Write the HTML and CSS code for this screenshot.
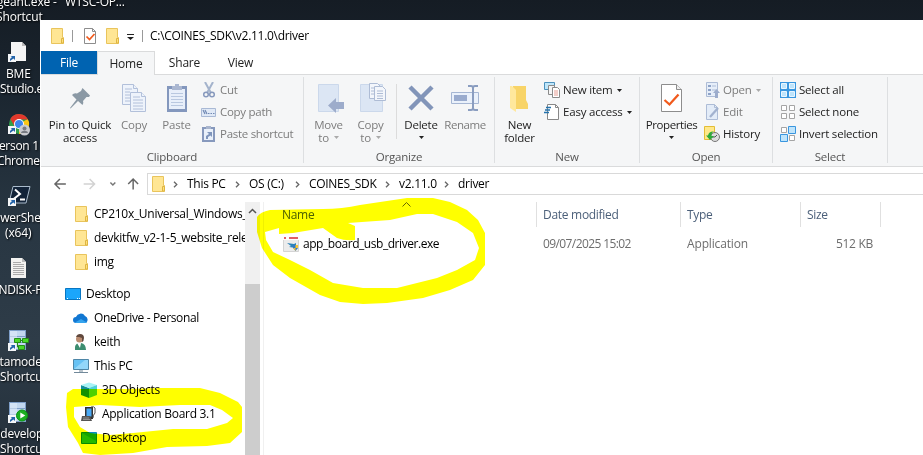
FILE: index.html
```html
<!DOCTYPE html>
<html lang="en">
<head>
<meta charset="utf-8">
<title>driver</title>
<link rel="stylesheet" href="styles.css">
</head>
<body>
<svg class="defs" width="0" height="0">
  <symbol id="folder" viewBox="0 0 13 16"><path d="M.5.5h11v9h1v6H.5z" fill="#ffe694" stroke="#e9c45c"/><path d="M10.500 15V10.500h2V15z" fill="#ffe07c" stroke="#deb542"/></symbol>
  <symbol id="chev" viewBox="0 0 5 7"><path d="M1 .7 3.800 3.500 1 6.300" fill="none" stroke="#666" stroke-width="1.300"/></symbol>
  <symbol id="drop" viewBox="0 0 5 3"><path d="M0 0h5L2.500 3z" fill="currentColor"/></symbol>
  <symbol id="link" viewBox="0 0 8 8"><path d="M0 0h8v8H0z" fill="#f4f6f8"/><path d="M2 7V5l2-2-1.500-1H7v4L5.500 4.500z" fill="#2364aa"/></symbol>
  <symbol id="check" viewBox="0 0 21 28"><path d="M.5.5h15l5 5v22H.5z" fill="#fff" stroke="#8d8d8d"/><path d="M15.500.5v5h5" fill="#eee" stroke="#8d8d8d"/><path d="m3.500 16 5 4.500 9-10" fill="none" stroke="#f15a1c" stroke-width="2.300"/></symbol>
  <symbol id="server" viewBox="0 0 17 21"><path d="M0 0h17v20H0z" fill="#7f9fc9"/><path d="M1 1h15v5H1zM1 7h15v5H1zM1 13h15v6H1z" fill="#c2d7ef"/><path d="M1 1h7v18H1z" fill="#e0ebf8" opacity=".6"/></symbol>
</svg>

<main class="desktop">
  <div class="lbl l1">geant.exe -</div><div class="lbl l2">WTSC-OP...</div><div class="lbl l3">Shortcut</div>
  <svg class="di i1" width="22" height="22" viewBox="0 0 22 22"><path d="M4 1h11l4 4v15H4z" fill="#f5f5f5"/><path d="M15 1v4h4z" fill="#bbb"/><use href="#link" x="1" y="13" width="8" height="8"/></svg>
  <div class="lbl l4">BME</div><div class="lbl l5">Studio.exe</div>
  <svg class="di i2" width="24" height="24" viewBox="0 0 24 24"><circle cx="12" cy="11" r="10" fill="#30a04b"/><path d="M12 11 20.700 6A10 10 0 0 1 12 21z" fill="#fbc613"/><path d="M12 6.500h9A10 10 0 0 0 3.300 6L8 14z" fill="#e2382c"/><circle cx="12" cy="11" r="5" fill="#fff"/><circle cx="12" cy="11" r="4" fill="#3f85ee"/><circle cx="17.500" cy="17" r="5.500" fill="#c9cbd0"/><circle cx="17.500" cy="15.500" r="2" fill="#777b82"/><path d="M14 20c0-3 7-3 7 0z" fill="#777b82"/><use href="#link" x="1" y="13" width="8" height="8"/></svg>
  <div class="lbl l6">Person 1 -</div><div class="lbl l7">Chrome</div>
  <svg class="di i3" width="24" height="22" viewBox="0 0 24 22"><path d="M6 1.500h17L19 18H2z" fill="#122338" stroke="#a9bacb"/><path d="m8 4.500 5 4.500-7 5.500M13 14.500h5" fill="none" stroke="#fff" stroke-width="2"/><use href="#link" x="1" y="13" width="8" height="8"/></svg>
  <div class="lbl l8">PowerShell</div><div class="lbl l9">(x64)</div>
  <svg class="di i4" width="16" height="20" viewBox="0 0 16 20"><path d="M0 0h11l4 4v16H0z" fill="#f2f2f0"/><path d="M11 0v4h4z" fill="#bbb"/><path d="M2 4.500h8M2 6.500h11M2 8.500h11M2 10.500h11M2 12.500h11M2 14.500h11M2 16.500h11" stroke="#aaa"/></svg>
  <div class="lbl l10">SANDISK-PC</div>
  <svg class="di i5" width="24" height="22" viewBox="0 0 24 22"><use href="#server" x="2" y="0" width="17" height="21"/><path d="M7.500 8.500h6v4h-6zM15.500 8.500h6v4h-6zM11.500 15.500h6v4h-6z" fill="#48d828" stroke="#238d17"/><path d="M14 10.500h1M10.500 13v4h1" fill="none" stroke="#238d17"/><use href="#link" x="1" y="13" width="8" height="8"/></svg>
  <div class="lbl l11">datamodeler</div><div class="lbl l12">Shortcut</div>
  <svg class="di i6" width="24" height="22" viewBox="0 0 24 22"><use href="#server" x="2" y="0" width="17" height="21"/><circle cx="15" cy="13.500" r="5.500" fill="#1caf22" stroke="#0a9414"/><path d="m13.300 10.500 5 3-5 3z" fill="#fff"/><use href="#link" x="1" y="13" width="8" height="8"/></svg>
  <div class="lbl l13">sqldeveloper</div><div class="lbl l14">Shortcut</div>

  <section class="window">
    <header class="titlebar">
      <svg class="t-folder" width="13" height="16"><use href="#folder"/></svg>
      <i class="bar b1"></i>
      <svg class="t-check" width="12" height="16" viewBox="0 0 12 16"><path d="M.5.500h8l3 3v12H.5z" fill="#fff" stroke="#8d8d8d"/><path d="M8.500.5v3h3" fill="none" stroke="#8d8d8d"/><path d="m2.500 8.500 3 3 5-5.500" fill="none" stroke="#f15a1c" stroke-width="1.700"/></svg>
      <svg class="t-folder2" width="13" height="16"><use href="#folder"/></svg>
      <svg class="t-menu" width="7" height="6" viewBox="0 0 7 6"><path d="M0 0h7v1H0zM0 3h7L3.500 6z" fill="#222"/></svg>
      <i class="bar b2"></i>
      <span class="path">C:\COINES_SDK\v2.11.0\driver</span>
    </header>
    <nav class="tabs"><span class="tab file">File</span><span class="tab home">Home</span><span class="tab share">Share</span><span class="tab view">View</span></nav>

    <div class="ribbon">
      <section class="group clipboard">
        <div class="tools">
          <div class="big pin"><svg width="30" height="30" viewBox="0 0 30 30"><path d="M17.500 5 25 12.500 24 14 21.500 14 18 18Q19 20.500 17.500 22L13 18 5.500 25.500 5 25 11.500 16.500 7 12Q9 9.500 12 10.500L16 8z" fill="#8b99a5"/></svg><span>Pin to Quick</span><span>access</span></div>
          <div class="big copy off"><svg width="30" height="30" viewBox="0 0 30 30"><g fill="#eef3fb" stroke="#b2c0da"><path d="M3.500 1.500h11l4 4v16h-15z"/><path d="M14.500 1.500v4h4M6 6h7M6 9h5M6 12h5M6 15h5M6 18h5"/><path d="M11.500 9.500h11l4 4v15h-15z"/><path d="M22.500 9.500v4h4M14 14h7M14 17h10M14 20h10M14 23h10M14 26h10" /></g></svg><span>Copy</span></div>
          <div class="big paste off"><svg width="30" height="30" viewBox="0 0 30 30"><path d="M5 3h20v26H5z" fill="#8397bd"/><path d="M7 6h16v20H7z" fill="#e8effa"/><path d="M9 10.500h12M9 13.500h12M9 16.500h12M9 19.500h12M9 22.500h12" stroke="#b9c8e0"/><path d="M10 7V3h3V1h4v2h3v4z" fill="#aab7d1"/></svg><span>Paste</span></div>
          <div class="smalls off">
            <div><svg width="16" height="16" viewBox="0 0 16 16"><path d="m4 0 6 11M12 0 6 11" stroke="#a4b3cc" stroke-width="2"/><circle cx="5" cy="12.500" r="2.300" fill="none" stroke="#8799bd" stroke-width="1.500"/><circle cx="11" cy="12.500" r="2.300" fill="none" stroke="#8799bd" stroke-width="1.500"/></svg><span>Cut</span></div>
            <div><svg width="16" height="16" viewBox="0 0 16 16"><path d="M.5 4.500h14v8H.5z" fill="#e0e9f6" stroke="#a9b9d5"/><path d="m2 6 2 4m0-4 2 4M7 9.500h1.500m1 0H11m1 0h1.500" stroke="#7189b3" stroke-width="1.200"/></svg><span>Copy path</span></div>
            <div><svg width="16" height="16" viewBox="0 0 16 16"><path d="M2 2h11v13H2z" fill="#e9f0fa" stroke="#8799bd" stroke-width="2"/><path d="M5 0h5v3H5z" fill="#a9b5cd"/><path d="M5 13v-3l3-2-2-2h5v5L9.500 9.500 7 11v2z" fill="#7f95bc"/></svg><span>Paste shortcut</span></div>
          </div>
        </div><footer>Clipboard</footer>
      </section>
      <section class="group organize">
        <div class="tools">
          <div class="big move off"><svg width="30" height="30" viewBox="0 0 30 30"><path d="M4.500 1.500h20v27h-20z" fill="#dce6f4" stroke="#cbd8eb"/><path d="M14 22.500 22 15v4h8v7h-8v4z" fill="#9daccb"/></svg><span>Move</span><span>to <svg class="dr" width="5" height="3"><use href="#drop"/></svg></span></div>
          <div class="big copyto off"><svg width="30" height="30" viewBox="0 0 30 30"><path d="M4.500 1.500h22v27h-22z" fill="#dce6f4" stroke="#cbd8eb"/><g fill="#f3f6fb" stroke="#aebcd5"><path d="M13.500.5h8l3 3v12h-11zM15 5h5M15 8h3M15 11h3"/><path d="M18.500 3.500h8l3 3v11h-11zM21 8h6M21 10.500h6M21 13h6M21 15.500h6"/></g></svg><span>Copy</span><span>to <svg class="dr" width="5" height="3"><use href="#drop"/></svg></span></div>
          <i class="split"></i>
          <div class="big delete"><svg width="30" height="30" viewBox="0 0 30 30"><path d="m4 4 22 22M26 4 4 26" stroke="#8295b9" stroke-width="4.500"/></svg><span>Delete</span><span><svg class="dr" width="5" height="3"><use href="#drop"/></svg></span></div>
          <div class="big rename off"><svg width="30" height="30" viewBox="0 0 30 30"><path d="M1.500 9.500h27v11h-27z" fill="#eaf1fb" stroke="#a5b6d3"/><path d="M4 12h13v6H4z" fill="#99abce"/><path d="M18 3h3q2 0 2 2 0-2 2-2h3M18 27h3q2 0 2-2 0 2 2 2h3M23 4v22" fill="none" stroke="#8a9dc0" stroke-width="2"/></svg><span>Rename</span></div>
        </div><footer>Organize</footer>
      </section>
      <section class="group new">
        <div class="tools">
          <div class="big folder"><svg width="30" height="30" viewBox="0 0 30 30"><path d="M8 3h13v14l2 4v5H8z" fill="#f8d468"/><path d="M5 3h2l4 4v22l-6-4z" fill="#ffe89d"/></svg><span>New</span><span>folder</span></div>
          <div class="smalls">
            <div><svg width="16" height="16" viewBox="0 0 16 16"><path d="M.5.5h10v7H.5z" fill="#bfe6fa" stroke="#4b91bd"/><path d="M4.500 3.500h6v9h-6z" fill="#f5f5f5" stroke="#8a8a8a"/><path d="M8.500 5.500h5l2 2v8h-7z" fill="#fff" stroke="#8a8a8a"/><path d="M10 9h4M10 11h4M10 13h4" stroke="#e59b91"/></svg><span>New item</span><svg class="dr" width="5" height="3"><use href="#drop"/></svg></div>
            <div><svg width="16" height="16" viewBox="0 0 16 16"><path d="M3.500.5h8l3 3v12h-11z" fill="#fff" stroke="#888"/><path d="M11.500.5v3h3" fill="none" stroke="#888"/><path d="M2 3.500h5M1 6h5M0 8.500h5" stroke="#2473ad" stroke-width="1.300"/></svg><span>Easy access</span><svg class="dr" width="5" height="3"><use href="#drop"/></svg></div>
          </div>
        </div><footer>New</footer>
      </section>
      <section class="group open">
        <div class="tools">
          <div class="big props"><svg width="30" height="30" viewBox="0 0 30 30"><use href="#check" x="4" y="1" width="21" height="28"/></svg><span>Properties</span><span><svg class="dr" width="5" height="3"><use href="#drop"/></svg></span></div>
          <div class="smalls">
            <div class="off"><svg width="16" height="16" viewBox="0 0 16 16"><path d="M2.500.5h11v14h-11z" fill="#e6eef9" stroke="#adbcd6"/><path d="M4 3h3v2H4zM4 7h3v2H4zM4 11h3v2H4z" fill="#8da2c7"/><path d="M8 4h4M8 8h4" stroke="#adbcd6"/><path d="m12.500 7 3.500 4h-2v5h-3v-5H9z" fill="#9caccc"/></svg><span>Open</span><svg class="dr" width="5" height="3"><use href="#drop"/></svg></div>
            <div class="off"><svg width="16" height="16" viewBox="0 0 16 16"><path d="M2.500.5h8l3 3v12h-11z" fill="#e3ecf8" stroke="#adbcd6"/><path d="M10.500.5v3h3" fill="none" stroke="#adbcd6"/><path d="m6 13 8-9" stroke="#a2b2cf" stroke-width="2.300"/></svg><span>Edit</span></div>
            <div><svg width="16" height="16" viewBox="0 0 16 16"><path d="M.5.500h10v13H.5z" fill="#ffe88a" stroke="#e3bd35"/><circle cx="11" cy="11" r="4.500" fill="#ddd" stroke="#777"/><path d="m11 11 2-2m-2 2h-3" stroke="#555"/><path d="M2 9.500h2Q5 5 10 5.500 7 7 7.500 10H10l-4 4z" fill="#2faa3a"/></svg><span>History</span></div>
          </div>
        </div><footer>Open</footer>
      </section>
      <section class="group select">
        <div class="tools"><div class="smalls">
          <div><svg width="16" height="16" viewBox="0 0 16 16"><path d="M0 0h16v16H0z" fill="#3996df"/><path d="M1.500 1.500h5v5h-5zM9.500 1.500h5v5h-5zM1.500 9.500h5v5h-5zM9.500 9.500h5v5h-5z" fill="#bfe4fb" stroke="#e9f6ff"/></svg><span>Select all</span></div>
          <div><svg width="16" height="16" viewBox="0 0 16 16"><path d="M1.500 1.500h5v5h-5zM9.500 1.500h5v5h-5zM1.500 9.500h5v5h-5zM9.500 9.500h5v5h-5z" fill="#fff" stroke="#a5a5a5"/></svg><span>Select none</span></div>
          <div><svg width="16" height="16" viewBox="0 0 16 16"><path d="M1.500 1.500h5v5h-5zM9.500 9.500h5v5h-5z" fill="#fff" stroke="#a5a5a5"/><path d="M8.500.5h7v7h-7zM.5 8.500h7v7h-7z" fill="#bfe4fb" stroke="#3996df"/></svg><span>Invert selection</span></div>
        </div></div><footer>Select</footer>
      </section>
    </div>

    <div class="address">
      <svg class="nav" width="96" height="16" viewBox="0 0 96 16" fill="none"><path d="M3 8h11M8 3 3 8l5 5" stroke="#666" stroke-width="1.500"/><path d="M32 8h11m-5-5 5 5-5 5" stroke="#d2d2d2" stroke-width="1.500"/><path d="m59 6.500 2.500 2.500L64 6.500" stroke="#777" stroke-width="1.500"/><path d="M82 13.500V3m-5 5 5-5 5 5" stroke="#666" stroke-width="1.500"/></svg>
      <div class="crumbs">
        <svg class="c-folder" width="13" height="16"><use href="#folder"/></svg>
        <svg class="c0" width="5" height="7"><use href="#chev"/></svg><span class="c1">This PC</span>
        <svg width="5" height="7"><use href="#chev"/></svg><span class="c2">OS (C:)</span>
        <svg width="5" height="7"><use href="#chev"/></svg><span class="c3">COINES_SDK</span>
        <svg width="5" height="7"><use href="#chev"/></svg><span class="c4">v2.11.0</span>
        <svg width="5" height="7"><use href="#chev"/></svg><span class="c5">driver</span>
      </div>
    </div>

    <div class="body">
      <aside class="tree">
        <div class="row r2"><svg width="16" height="16"><use href="#folder" x="0" y="0" width="13" height="16"/></svg><span class="n1">CP210x_Universal_Windows_</span></div>
        <div class="row r2"><svg width="16" height="16"><use href="#folder" x="0" y="0" width="13" height="16"/></svg><span class="n2">devkitfw_v2-1-5_website_release</span></div>
        <div class="row r2"><svg width="16" height="16"><use href="#folder" x="0" y="0" width="13" height="16"/></svg><span>img</span></div>
        <div class="row r1"><svg width="16" height="16" viewBox="0 0 16 16"><path d="M.5 2.500h15v11H.5z" fill="#1ba6fb" stroke="#0876c2"/><path d="M2 12.500h1m9 0h1m1 0h1" stroke="#fff"/></svg><span>Desktop</span></div>
        <div class="row r2b"><svg width="16" height="16" viewBox="0 0 16 16"><path d="M3 13a3 3 0 0 1 0-6 5 5 0 0 1 9-1 4 4 0 0 1 1 7z" fill="#1277d2"/><path d="M2 12.500 8 9l6 3.500-1 .5H3z" fill="#35a4ee"/></svg><span class="n5">OneDrive - Personal</span></div>
        <div class="row r2b"><svg width="16" height="16" viewBox="0 0 16 16"><path d="M2 16q-1-6 4-7h2q5 1 5 7z" fill="#3c8d70"/><path d="m4 9 3 5 1-5z" fill="#fff"/><circle cx="6.500" cy="5" r="3.500" fill="#b98b70"/><path d="M3 3q1-3 4-3 4 0 4 4 0 3-2 4V4L6 3z" fill="#61483c"/></svg><span>keith</span></div>
        <div class="row r2b"><svg width="16" height="16" viewBox="0 0 16 16"><path d="M.5 1.500h15v10H.5z" fill="#67c2f4" stroke="#4e86a7"/><path d="M1 11 12 2h3v9z" fill="#93d7fa"/><path d="M1 14.500h14M6 13h4" stroke="#72899a"/></svg><span>This PC</span></div>
        <div class="row r3"><svg width="16" height="16" viewBox="0 0 16 16"><path d="M0 3v10l8 3V6z" fill="#12909c"/><path d="m0 3 8-2.500L16 3 8 6z" fill="#a8f2f5"/><path d="M8 6v10l8-3V3z" fill="#4fd0da"/></svg><span>3D Objects</span></div>
        <div class="row r3"><svg width="16" height="16" viewBox="0 0 16 16"><path d="M4 1h8v12H4z" fill="#333"/><path d="M5.500 2.500h5v8h-5z" fill="#4aa9f5"/><path d="M1 10h8l2 5H0z" fill="#555"/><path d="M2 12h6M2 13.500h7" stroke="#bbb" stroke-width=".6"/><path d="M12 12q0-3 2-5V2q-1-2-4-1" fill="none" stroke="#555"/></svg><span class="n9">Application Board 3.1</span></div>
        <div class="row r3"><svg width="16" height="16" viewBox="0 0 16 16"><path d="M.5 2.500h15v11H.5z" fill="#14a5f4" stroke="#078bc4"/><path d="m1 3 14 8v2H1z" fill="#25b9b5"/></svg><span>Desktop</span></div>
      </aside>
      <div class="scroll"><svg width="9" height="6" viewBox="0 0 9 6"><path d="m1 5 3.500-3.500L8 5" fill="none" stroke="#555" stroke-width="1.500"/></svg><div class="thumb"></div></div>
      <section class="files">
        <svg class="sort" width="9" height="5" viewBox="0 0 9 5"><path d="m.5 4.500 4-4 4 4" fill="none" stroke="#666"/></svg>
        <div class="head"><span class="h1">Name</span><span class="h2">Date modified</span><span class="h3">Type</span><span class="h4">Size</span></div>
        <div class="item"><div class="name"><svg width="16" height="16" viewBox="0 0 16 16"><path d="M.5.5h15v15H.5z" fill="#ececec" stroke="#d4d4d4"/><path d="M0 0h16v4H0z" fill="#fff"/><path d="M1 2h2m3 0h9" stroke="#d92c33" stroke-width="1.300"/><path d="m4 7 7 1 2-1v5l-7-1 2-1z" fill="#2c83b9"/><path d="M10 9h5v3l-2.500 3-2.500-3z" fill="#3278c6"/><path d="M12.500 9H15v3h-5l2.500 3z" fill="#f7c531"/></svg><span>app_board_usb_driver.exe</span></div><span class="date">09/07/2025 15:02</span><span class="type">Application</span><span class="size">512 KB</span></div>
      </section>
    </div>
  </section>

  <svg class="marker" width="923" height="455" viewBox="0 0 923 455" fill="#ff0" fill-rule="evenodd">
    <path d="M257 217Q260 212 270 210L323 209Q342 209 360 205L407 198H433L450 202 467 210 478 220 485 233V265L473 280 450 290 423 298 387 303 363 304 340 302 320 295 290 278 273 265 262 248 257 232ZM265 232 279 228V234L293 233 323 228 337 238Q345 241 355 240V226L348 223 390 220 417 214H433L457 222 473 233 479 248 475 260 457 270 437 278 397 288H363L333 283 310 270 290 260 273 252 266 240Z"/>
    <path d="M67 393 73 389H127L160 388H200L220 393 238 402 242 407V432L230 443 207 446 167 447 133 453 100 455 83 453 78 443 68 427 66 407ZM74 407 100 405 140 407 180 405H210L222 410 233 418 227 423 207 429H173L133 433 110 435 90 433 80 427 74 417Z"/>
  </svg>
</main>
</body>
</html>
```
FILE: styles.css
```css
* { box-sizing: border-box; }
body { margin: 0; width: 923px; height: 455px; overflow: hidden; font: 12px/16px "Open Sans", "Noto Sans", sans-serif; letter-spacing: -.29px; color: #000; }
svg { flex: none; display: block; }
.defs { position: absolute; }
span { white-space: nowrap; }
.desktop { position: relative; width: 923px; height: 455px; overflow: hidden; background: linear-gradient(#151c24, #1b2630 20%, #283642 48%, #2e3c48 75%, #24303b); }

/* Desktop shortcuts */
.lbl, .di { position: absolute; }
.lbl { color: #fff; white-space: nowrap; text-shadow: 1px 1px 2px #000; letter-spacing: -.15px; }
.l1 { left: -3px; top: -6px; } .l2 { left: 65px; top: -6px; letter-spacing: -.2px; } .l3 { left: -4px; top: 9px; }
.l4 { left: 6px; top: 66px; } .l5 { left: 0; top: 81px; letter-spacing: -.35px; }
.l6 { left: -8px; top: 138px; letter-spacing: -.3px; } .l7 { left: -3px; top: 153px; letter-spacing: -.4px; }
.l8 { left: -14px; top: 210px; } .l9 { left: 5px; top: 225px; }
.l10 { left: -15px; top: 282px; letter-spacing: -.35px; }
.l11 { left: -14px; top: 354px; letter-spacing: -.2px; } .l12 { left: 0; top: 369px; }
.l13 { left: -15px; top: 426px; letter-spacing: -.25px; } .l14 { left: 0; top: 441px; }
.i1 { left: 7px; top: 41px; } .i2 { left: 7px; top: 113px; } .i3 { left: 7px; top: 185px; }
.i4 { left: 11px; top: 258px; } .i5 { left: 7px; top: 330px; } .i6 { left: 7px; top: 402px; }

/* Explorer window */
.window { position: absolute; left: 40px; top: 20px; width: 883px; height: 435px; padding-left: 1px; background: #fff; display: flex; flex-direction: column; }
.titlebar { height: 31px; flex: none; display: flex; align-items: center; padding-left: 10px; }
.bar { width: 1px; height: 12px; background: #999; }
.b1 { margin-left: 8px; } .t-check { margin-left: 11px; } .t-folder2 { margin-left: 10px; }
.t-menu { margin: 3px 0 0 8px; } .b2 { margin-left: 8px; } .path { margin-left: 7px; }
.tabs { height: 23px; flex: none; display: flex; position: relative; z-index: 1; }
.tab { text-align: center; line-height: 24px; height: 23px; letter-spacing: -.2px; color: #222; }
.file { width: 56px; background: #0063b1; color: #fff; }
.home { width: 58px; height: 24px; background: #f5f6f7; border: 1px solid #dadbdc; border-bottom: 0; line-height: 23px; }
.share { width: 59px; } .view { width: 53px; }
.ribbon { height: 93px; flex: none; display: flex; background: #f5f6f7; border: solid #dadbdc; border-width: 1px 0; color: #222; font-size: 11.5px; letter-spacing: -.2px; }
.group { height: 86px; margin-top: 2px; border-right: 1px solid #dddfe1; display: flex; flex-direction: column; }
.tools { height: 71px; flex: none; display: flex; }
.group footer { text-align: center; color: #555; height: 15px; line-height: 18px; flex: none; }
.clipboard { width: 263px; } .organize { width: 191px; } .new { width: 145px; } .open { width: 133px; } .select { width: 115px; }
.big { display: flex; flex-direction: column; align-items: center; padding-top: 6px; }
.big > svg { margin-bottom: 5px; }
.big span { height: 13px; line-height: 13px; }
.dr { display: inline-block; margin-left: 2px; vertical-align: 3px; color: #222; }
.off { color: #7c7c7c; } .off .dr { color: #aaa; }
.pin { width: 78px; } .copy { width: 30px; } .paste { width: 55px; }
.pin span { letter-spacing: -.15px; } .props span { letter-spacing: -.4px; }
.smalls { padding-top: 2px; }
.smalls > div { height: 22px; display: flex; align-items: center; gap: 3px; }
.smalls .dr { margin-left: 1px; }
.clipboard .smalls { margin-left: -3px; letter-spacing: -.28px; }
.move { width: 49px; } .copyto { width: 35px; } .split { width: 1px; height: 55px; margin: 7px 0 0 8px; background: #dcdcdc; }
.delete { width: 48px; } .rename { width: 40px; } .rename span { letter-spacing: -.45px; }
.delete .dr, .props .dr { margin-left: 0; }
.folder { width: 49px; }
.props { width: 63px; } .open .smalls { margin-left: 1px; } .select .smalls { padding-left: 7px; }

.address { height: 35px; flex: none; display: flex; padding-top: 6px; }
.nav { margin: 3px 0 0 11px; width: 95px; }
.crumbs { flex: 1; height: 22px; border: 1px solid #d9d9d9; border-right: 0; display: flex; align-items: center; }
.c-folder { margin-left: 4px; } .c0 { margin-left: 8px; }
.crumbs span { padding-left: 9px; }
.c1 { width: 57px; } .c2 { width: 55px; } .c3 { width: 85px; } .c4 { width: 54px; }

.body { flex: 1; min-height: 0; display: flex; }
.tree { width: 204px; overflow: hidden; }
.row { height: 24px; display: flex; align-items: center; gap: 4px; }
.r1 { margin-top: 8px; padding-left: 24px; gap: 5px; } .r2 { padding-left: 34px; gap: 3px; } .r2b { padding-left: 32px; gap: 5px; } .r3 { padding-left: 40px; gap: 5px; }
.n5 { letter-spacing: -.36px; }
.scroll { width: 15px; background: #f0f0f0; display: flex; flex-direction: column; align-items: center; padding-top: 6px; }
.thumb { width: 15px; margin-top: 70px; flex: 1; background: #cdcdcd; }
.files { flex: 1; margin-left: 3px; border-left: 1px solid #f0f0f0; position: relative; }
.sort { position: absolute; left: 138px; top: 0; }
.head { height: 25px; display: flex; color: #4c607a; line-height: 26px; }
.head span { border-right: 1px solid #e0e0e0; }
.h1 { width: 273px; padding-left: 18px; } .h2 { width: 144px; padding-left: 6px; } .h3 { width: 120px; padding-left: 6px; } .h4 { width: 80px; padding-left: 6px; }
.item { height: 34px; display: flex; align-items: center; color: #6d6d6d; }
.name { width: 273px; padding-left: 19px; display: flex; gap: 4px; color: #000; letter-spacing: -.45px; }
.date { width: 144px; padding-left: 6px; letter-spacing: -.6px; } .type { width: 120px; padding-left: 6px; letter-spacing: -.15px; } .size { width: 72px; text-align: right; }

.marker { position: absolute; left: 0; top: 0; mix-blend-mode: multiply; pointer-events: none; }
```
